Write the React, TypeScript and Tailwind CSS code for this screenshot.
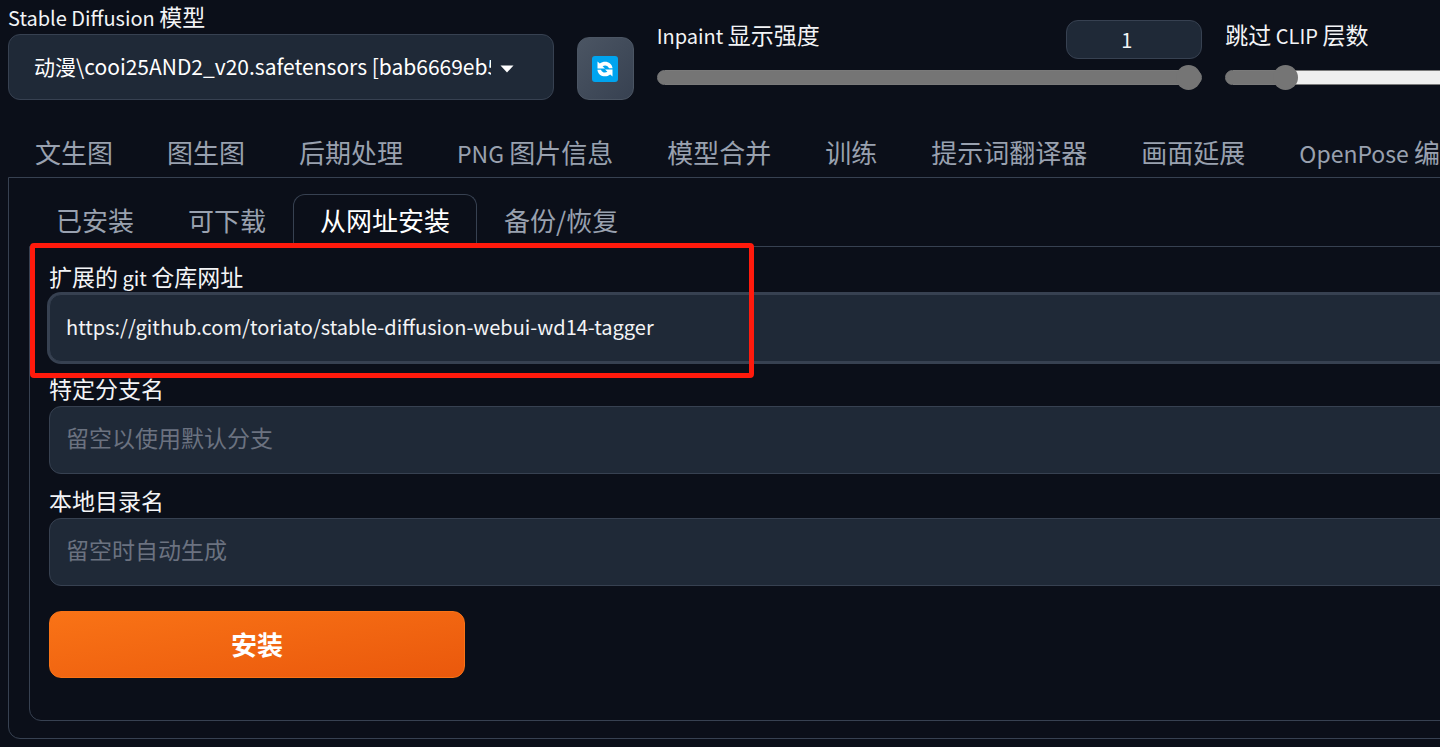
import { useState } from "react";

const mainTabs = ["文生图", "图生图", "后期处理", "PNG 图片信息", "模型合并", "训练", "提示词翻译器", "画面延展", "OpenPose 编辑"];
const extTabs = ["已安装", "可下载", "从网址安装", "备份/恢复"];

const rangeClass =
  "block w-full h-[15px] appearance-none rounded-full border border-[#7a7a7a] " +
  "[&::-webkit-slider-thumb]:appearance-none [&::-webkit-slider-thumb]:size-[25px] " +
  "[&::-webkit-slider-thumb]:rounded-full [&::-webkit-slider-thumb]:bg-[#757575]";

// 英文部分用小一号的字
function Mixed({ text, latinClass }: { text: string; latinClass: string }) {
  return (
    <>
      {text.split(/([A-Za-z ]+)/).map((part, i) =>
        i % 2 === 1 ? <span key={i} className={latinClass}>{part}</span> : part
      )}
    </>
  );
}

function Slider({ id, label, min, max, step, initial, showNumber }: {
  id: string;
  label: string;
  min: number;
  max: number;
  step: number;
  initial: number;
  showNumber?: boolean;
}) {
  const [value, setValue] = useState(initial);
  const percent = ((value - min) / (max - min)) * 100;

  return (
    <div className="flex-1 min-w-0 pt-5">
      <div className="flex justify-between h-[39px] mb-[11px]">
        <label htmlFor={id} className="leading-7"><Mixed text={label} latinClass="text-[20px]" /></label>
        {showNumber && (
          <input
            type="number"
            aria-label={label}
            value={value}
            onChange={(e) => setValue(Number(e.target.value))}
            className="w-[136px] h-[39px] px-2 text-[20px] text-center rounded-xl border border-[#374151] bg-[#1f2937] outline-none"
          />
        )}
      </div>
      <input
        id={id}
        type="range"
        min={min}
        max={max}
        step={step}
        value={value}
        onChange={(e) => setValue(Number(e.target.value))}
        className={rangeClass}
        style={{ background: `linear-gradient(to right, #757575 ${percent}%, #efefef ${percent}%)` }}
      />
    </div>
  );
}

function Field({ id, label, placeholder, initial = "", active }: {
  id: string;
  label: string;
  placeholder?: string;
  initial?: string;
  active?: boolean;
}) {
  const [value, setValue] = useState(initial);

  return (
    <div>
      <label htmlFor={id} className="block h-[34px] leading-8"><Mixed text={label} latinClass="text-[20px]" /></label>
      <input
        id={id}
        type="text"
        value={value}
        placeholder={placeholder}
        onChange={(e) => setValue(e.target.value)}
        className={`block w-full h-[68px] px-4 rounded-xl border border-[#374151] bg-[#1f2937] outline-none placeholder:text-[#6b7280] ${active ? "pb-1 text-[20px] ring-2 ring-[#374151]" : "pb-[6px]"}`}
      />
    </div>
  );
}

export default function App() {
  const [mainTab, setMainTab] = useState("");
  const [extTab, setExtTab] = useState("从网址安装");

  return (
    <div className="min-h-screen overflow-x-hidden bg-[#0b0f19] pl-2 pb-2 text-[23px] text-gray-100 font-['Noto_Sans_CJK_SC',sans-serif]">
      <div className="-mr-[331px]">
        {/* 顶部快捷设置 */}
        <header className="flex gap-[23px] h-[100px]">
          <div className="flex-1 min-w-0">
            <label htmlFor="model" className="block h-[34px] leading-8"><Mixed text="Stable Diffusion 模型" latinClass="text-[20px]" /></label>
            <div className="relative">
              <select
                id="model"
                className="block w-full h-[66px] pl-[25px] pr-[62px] appearance-none rounded-xl border border-[#374151] bg-[#1f2937] text-[21px] text-white outline-none"
              >
                <option>动漫\cooi25AND2_v20.safetensors [bab6669eb5]</option>
              </select>
              <svg className="absolute right-10 top-[31px] w-[14px] h-[8px] pointer-events-none" viewBox="0 0 14 8">
                <path d="M0.5 0.5h13L7 7.5z" fill="#fff" />
              </svg>
            </div>
          </div>
          <button
            type="button"
            aria-label="刷新"
            className="flex items-center justify-center self-end w-[57px] h-[63px] rounded-xl border border-[#4b5563] bg-linear-to-br from-[#4b5563] to-[#374151]"
          >
            <svg className="size-[26px]" viewBox="0 0 26 26">
              <rect width="26" height="26" rx="3" fill="#00a4ef" />
              <path d="M5.5 5.5v7H13L10.6 10.2C13 8.6 16.2 9.6 17 12.3H20.6C20 6 12.5 3.6 7.8 7.6z" fill="#fff" />
              <path d="M20.5 20.5v-7H13L15.4 15.8C13 17.4 9.8 16.4 9 13.7H5.4C6 20 13.5 22.4 18.2 18.4z" fill="#fff" />
            </svg>
          </button>
          <Slider id="inpaint" label="Inpaint 显示强度" min={0} max={1} step={0.1} initial={1} showNumber />
          <Slider id="clip" label="跳过 CLIP 层数" min={1} max={12} step={1} initial={2} />
        </header>

        <nav className="flex mt-[26px] text-[26px] text-gray-400">
          {mainTabs.map((tab) => (
            <button
              key={tab}
              type="button"
              onClick={() => setMainTab(tab)}
              className={`h-[52px] px-[27px] pb-[2px] whitespace-nowrap ${mainTab === tab ? "text-white" : ""}`}
            >
              <Mixed text={tab} latinClass="text-[23px]" />
            </button>
          ))}
        </nav>

        <main className="-mt-px px-5 pt-4 pb-[17px] border border-[#374151] rounded-b-xl">
          <nav className="flex text-[26px] text-gray-400">
            {extTabs.map((tab) => (
              <button
                key={tab}
                type="button"
                onClick={() => setExtTab(tab)}
                className={`h-[53px] -mb-px px-[26px] pb-1 border border-b-0 rounded-t-xl whitespace-nowrap ${extTab === tab ? "border-[#374151] bg-[#0b0f19] text-white" : "border-transparent"}`}
              >
                {tab}
              </button>
            ))}
          </nav>

          <form className="relative px-[19px] pt-[13px] pb-[42px] border border-[#374151] rounded-b-xl" onSubmit={(e) => e.preventDefault()}>
            <div className="flex flex-col gap-[10px]">
              <Field id="git-url" label="扩展的 git 仓库网址" initial="https://github.com/toriato/stable-diffusion-webui-wd14-tagger" active />
              <Field id="branch" label="特定分支名" placeholder="留空以使用默认分支" />
              <Field id="dirname" label="本地目录名" placeholder="留空时自动生成" />
            </div>
            <button
              type="submit"
              className="block mt-[25px] w-[416px] h-[67px] pb-[2px] rounded-xl border border-[#f97316] bg-linear-to-br from-[#f97316] to-[#ea580c] text-[26px] font-bold text-white"
            >
              安装
            </button>

            {/* 红色标注框 */}
            <div className="absolute left-0 -top-1 w-[724px] h-[135px] border-[5px] border-[#ff1a0c] rounded-sm pointer-events-none" />
          </form>
        </main>
      </div>
    </div>
  );
}
